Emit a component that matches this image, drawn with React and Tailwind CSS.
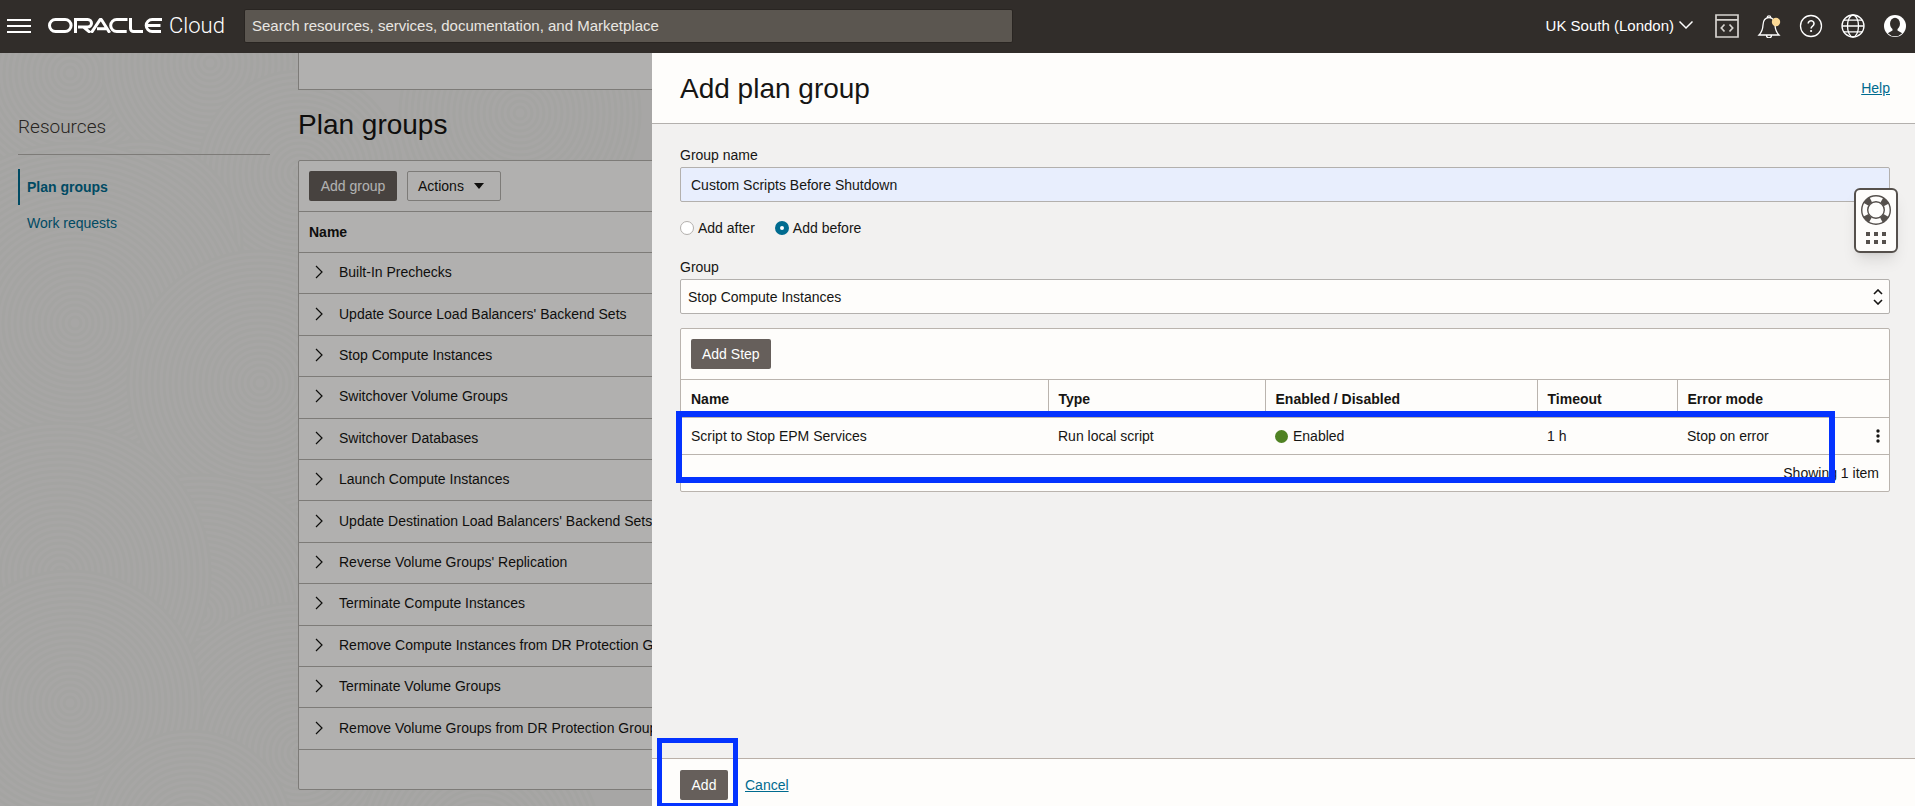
import { useState } from 'react'

const planGroups = [
  'Built-In Prechecks',
  "Update Source Load Balancers' Backend Sets",
  'Stop Compute Instances',
  'Switchover Volume Groups',
  'Switchover Databases',
  'Launch Compute Instances',
  "Update Destination Load Balancers' Backend Sets",
  "Reverse Volume Groups' Replication",
  'Terminate Compute Instances',
  'Remove Compute Instances from DR Protection Group',
  'Terminate Volume Groups',
  'Remove Volume Groups from DR Protection Group',
]

const steps = [
  { name: 'Script to Stop EPM Services', type: 'Run local script', status: 'Enabled', timeout: '1 h', errorMode: 'Stop on error' },
]

// centre x, centre y, number of rings
const swirls = [
  [70, 20, 22], [210, 10, 18], [520, 60, 20], [300, 120, 17], [140, 190, 17],
  [75, 270, 30], [260, 330, 22], [200, 560, 23], [60, 520, 25], [300, 700, 25],
  [70, 650, 22], [190, 780, 17], [480, 790, 20],
]

function OracleLogo() {
  return (
    <svg className="h-[15px] w-[114px]" viewBox="0 0 114 15" role="img" aria-label="Oracle">
      <g fill="none" stroke="#fff" strokeWidth="3">
        <rect x="1.5" y="1.5" width="21.6" height="12" rx="6" />
        <path d="M27.500 15V1.500h12.200a3.800 3.800 0 0 1 0 7.600H30M35.500 9.200l6.800 5.400" />
        <path d="M43.300 14.800l8.600-13q.8-1.200 1.600 0l8.200 13M49 10.800h9" />
        <path d="M79.500 1.500H68.700a6 6 0 0 0 0 12h10" />
        <path d="M82.500 0v10.500a3 3 0 0 0 3 3H95" />
        <path d="M114 1.500h-9.800a6 6 0 0 0 0 12H113M99 7.500h13.500" />
      </g>
    </svg>
  )
}

function DevToolsIcon() {
  return (
    <svg className="h-6 w-6" viewBox="0 0 24 24" fill="none" stroke="#d6d3cf" strokeWidth="1.700">
      <path d="M1 1h22v22H1zM1 5.800h22M9.500 10.500L6.300 14l3.200 3.500M14.500 10.500l3.200 3.500-3.200 3.500" />
    </svg>
  )
}

function BellIcon() {
  return (
    <svg className="h-6 w-6" viewBox="0 0 24 24" fill="none" stroke="#fff" strokeWidth="1.300">
      <path d="M2 21c2.400-2.400 3.800-5.500 4-10 .2-4.500 2-7.300 6-7.300s5.800 2.800 6 7.300c.2 4.500 1.600 7.600 4 10zM10.300 3.500a1.700 1.700 0 1 1 3.400 0M9.500 21.300a2.500 2.500 0 0 0 5 0" />
      <circle cx="19" cy="8" r="4.200" fill="#fbd995" stroke="none" />
    </svg>
  )
}

function HelpIcon() {
  return (
    <svg className="h-6 w-6" viewBox="0 0 24 24" fill="none" stroke="#fff" strokeWidth="1.300">
      <circle cx="12" cy="12" r="10.500" />
      <path d="M9.200 9.600a2.900 2.900 0 1 1 4.400 2.500c-1 .7-1.500 1.200-1.500 2.500" strokeWidth="1.600" />
      <circle cx="12.100" cy="17" r="1.100" fill="#fff" stroke="none" />
    </svg>
  )
}

function GlobeIcon() {
  return (
    <svg className="h-6 w-6" viewBox="0 0 24 24" fill="none" stroke="#fff" strokeWidth="1.300">
      <circle cx="12" cy="12" r="11" />
      <ellipse cx="12" cy="12" rx="5.500" ry="11" />
      <path d="M1 12h22M3 6.200h18M3 17.800h18" />
    </svg>
  )
}

function AvatarIcon() {
  return (
    <svg className="h-6 w-6" viewBox="0 0 24 24">
      <circle cx="12" cy="12" r="11" fill="#fff" />
      <ellipse cx="12" cy="9.700" rx="5" ry="6" fill="#312d2a" />
      <path d="M9.500 13h5v3.500l4.700 2.800a10 10 0 0 1-14.400 0l4.700-2.800z" fill="#312d2a" />
    </svg>
  )
}

function Header() {
  return (
    <header className="flex h-[53px] shrink-0 items-center bg-[#312d2a] pr-2 pb-0.5 pl-[7px] text-[15px] text-white">
      <button aria-label="Menu" className="flex w-6 flex-col gap-1">
        <span className="h-0.5 bg-white" />
        <span className="h-0.5 bg-white" />
        <span className="h-0.5 bg-white" />
      </button>
      <a href="#home" className="ml-[17px] flex w-[196px] items-center gap-[7px]">
        <OracleLogo />
        <span className="font-[Roboto] text-[22px] leading-6 font-light">Cloud</span>
      </a>
      <input
        aria-label="Search"
        placeholder="Search resources, services, documentation, and Marketplace"
        className="h-[34px] w-[769px] rounded-xs border border-[#292522] bg-[#5b5650] px-[7px] placeholder:text-[#e9e6e2]"
      />
      <div className="ml-auto flex items-center gap-[18px]">
        <button className="flex items-center gap-[5px]">
          UK South (London)
          <svg className="h-2.5 w-3.5" viewBox="0 0 14 10" fill="none" stroke="#fff" strokeWidth="1.500">
            <path d="M.5 1.500L7 8l6.500-6.500" />
          </svg>
        </button>
        <button aria-label="Developer tools" className="ml-1"><DevToolsIcon /></button>
        <button aria-label="Notifications"><BellIcon /></button>
        <button aria-label="Help"><HelpIcon /></button>
        <button aria-label="Language"><GlobeIcon /></button>
        <button aria-label="Profile"><AvatarIcon /></button>
      </div>
    </header>
  )
}

function Swirls() {
  return (
    <svg className="absolute inset-0 h-full w-full" aria-hidden="true">
      {swirls.map(([x, y, count]) => (
        <g key={`${x}-${y}`} fill="#f0eeec" stroke="#ebebe8" strokeWidth="3">
          {Array.from({ length: count }, (_, i) => (
            <circle key={i} cx={x} cy={y} r={(count - i) * 6} />
          ))}
        </g>
      ))}
    </svg>
  )
}

function Sidebar() {
  return (
    <nav className="w-[252px] shrink-0 pt-[62px]">
      <h2 className="border-b border-[#b3b0ad] pb-[15px] font-[Roboto] text-[19px] leading-6 font-light text-[#3a3632]">Resources</h2>
      <ul className="mt-3.5">
        <li className="flex h-9 items-center border-l-2 border-[#006b8f] pl-[7px]">
          <a href="#plan-groups" className="font-bold text-[#006b8f]">Plan groups</a>
        </li>
        <li className="flex h-9 items-center pl-[9px]">
          <a href="#work-requests" className="text-[#006b8f]">Work requests</a>
        </li>
      </ul>
    </nav>
  )
}

function PlanGroups() {
  return (
    <section className="flex-1">
      <div className="h-[37px] border border-t-0 border-[#b3b0ad] bg-[#fefdfb]" />
      <h1 className="mt-[17px] mb-[17px] text-[28px] leading-9">Plan groups</h1>
      <div className="rounded-xs border border-[#b3b0ad] bg-[#fefdfb]">
        <div className="flex gap-2.5 p-2.5">
          <button className="h-[30px] w-[88px] rounded-xs bg-[#665f5b] text-white">Add group</button>
          <button className="flex h-[30px] w-[94px] items-center gap-2.5 rounded-xs border border-[#b3b0ad] pl-2.5">
            Actions
            <svg className="h-1.5 w-2.5" viewBox="0 0 10 6"><path d="M0 0h10L5 6z" fill="#161513" /></svg>
          </button>
        </div>
        <table className="h-[539px] w-full text-left">
          <thead>
            <tr className="h-[41px] border-y border-[#b3b0ad]">
              <th className="px-2.5 font-bold">Name</th>
            </tr>
          </thead>
          <tbody>
            {planGroups.map((group) => (
              <tr key={group} className="border-b border-[#b3b0ad]">
                <td className="pb-0.5 pl-4">
                  <div className="flex items-center gap-4">
                    <button aria-label={`Expand ${group}`}>
                      <svg className="h-3.5 w-2" viewBox="0 0 8 14" fill="none" stroke="#161513" strokeWidth="1.200">
                        <path d="M1 1l6 6-6 6" />
                      </svg>
                    </button>
                    {group}
                  </div>
                </td>
              </tr>
            ))}
          </tbody>
        </table>
        <div className="h-[39px]" />
      </div>
    </section>
  )
}

function SupportWidget() {
  return (
    <button aria-label="Support" className="absolute top-[135px] right-[17px] flex h-[65px] w-11 flex-col items-center rounded-md border-2 border-[#55504c] bg-[#fefdfb] pt-[5px] shadow-lg">
      <svg className="h-[52px] w-[30px]" viewBox="0 0 30 52" fill="none" stroke="#55504c">
        <circle cx="15" cy="15" r="11.500" strokeWidth="6" strokeDasharray="6.500 11.560" strokeDashoffset="-5.800" />
        <circle cx="15" cy="15" r="14.300" strokeWidth="1.400" />
        <circle cx="15" cy="15" r="8.300" strokeWidth="1.400" />
        <path d="M5 39h4m4 0h4m4 0h4M5 47h4m4 0h4m4 0h4" strokeWidth="4" />
      </svg>
    </button>
  )
}

function StepsTable() {
  return (
    <div className="relative mt-3.5 rounded-xs border border-[#bab4ae] bg-[#fefdfb]">
      <div className="p-2.5">
        <button className="h-[30px] rounded-xs bg-[#665f5b] px-[11px] text-white">Add Step</button>
      </div>
      <table className="w-full table-fixed text-left">
        <colgroup>
          <col className="w-[367px]" />
          <col className="w-[217px]" />
          <col className="w-[272px]" />
          <col className="w-[140px]" />
          <col />
          <col className="w-[22px]" />
        </colgroup>
        <thead>
          <tr className="h-[38px] border-y border-[#bab4ae]">
            <th className="border-r border-[#bab4ae] px-2.5">Name</th>
            <th className="border-r border-[#bab4ae] px-2.5">Type</th>
            <th className="border-r border-[#bab4ae] px-2.5">Enabled / Disabled</th>
            <th className="border-r border-[#bab4ae] px-2.5">Timeout</th>
            <th className="px-2.5">Error mode</th>
            <th aria-label="Row actions" />
          </tr>
        </thead>
        <tbody>
          {steps.map((step) => (
            <tr key={step.name} className="h-[37px] border-b border-[#bab4ae]">
              <td className="px-2.5">{step.name}</td>
              <td className="px-2.5">{step.type}</td>
              <td className="px-2.5">
                <span className="flex items-center gap-[5px]">
                  <span className="h-[13px] w-[13px] rounded-full bg-[#508223]" />
                  {step.status}
                </span>
              </td>
              <td className="px-2.5">{step.timeout}</td>
              <td className="px-2.5">{step.errorMode}</td>
              <td>
                <button aria-label="Step actions" className="flex w-full justify-center">
                  <svg className="h-3.5 w-1" viewBox="0 0 4 14" fill="#161513">
                    <circle cx="2" cy="2" r="1.700" />
                    <circle cx="2" cy="7" r="1.700" />
                    <circle cx="2" cy="12" r="1.700" />
                  </svg>
                </button>
              </td>
            </tr>
          ))}
        </tbody>
      </table>
      <p className="px-2.5 py-2 text-right">Showing 1 item</p>
      <div className="pointer-events-none absolute top-[82px] right-[54px] -left-[5px] h-[72px] border-[6px] border-[#0433ff]" />
    </div>
  )
}

function AddPlanGroupPanel() {
  const [name, setName] = useState('Custom Scripts Before Shutdown')
  const [position, setPosition] = useState('before')

  const radioClass =
    'h-3.5 w-3.5 appearance-none rounded-full border border-[#b3b0ad] bg-white checked:border-[5px] checked:border-[#006b8f]'

  return (
    <aside className="absolute inset-y-0 right-0 left-[652px] flex flex-col bg-[#f2f1f0]">
      <div className="flex h-[71px] shrink-0 items-center justify-between border-b border-[#b3b0ad] bg-[#fefdfb] pr-[25px] pl-7">
        <h1 className="pt-0.5 text-[28px] leading-9">Add plan group</h1>
        <a href="#help" className="text-[#006b8f] underline">Help</a>
      </div>

      <div className="flex-1 overflow-hidden pt-5 pr-[25px] pl-7">
        <label htmlFor="group-name" className="block pb-px leading-[22px]">Group name</label>
        <input
          id="group-name"
          value={name}
          onChange={(e) => setName(e.target.value)}
          className="h-[35px] w-full rounded-xs border border-[#b3b0ad] bg-[#e8eefd] px-2.5"
        />

        <div className="mt-4 flex gap-5">
          <label className="flex items-center gap-1">
            <input type="radio" name="position" className={radioClass} checked={position === 'after'} onChange={() => setPosition('after')} />
            Add after
          </label>
          <label className="flex items-center gap-1">
            <input type="radio" name="position" className={radioClass} checked={position === 'before'} onChange={() => setPosition('before')} />
            Add before
          </label>
        </div>

        <label htmlFor="group" className="mt-[18px] block pb-px leading-[22px]">Group</label>
        <div className="relative">
          <select id="group" defaultValue="Stop Compute Instances" className="h-[35px] w-full appearance-none rounded-xs border border-[#b3b0ad] bg-[#fefdfb] px-[7px]">
            {planGroups.map((group) => (
              <option key={group}>{group}</option>
            ))}
          </select>
          <svg className="pointer-events-none absolute top-2.5 right-[7px] h-4 w-2.5" viewBox="0 0 10 16" fill="none" stroke="#161513" strokeWidth="1.600">
            <path d="M1 5l4-4 4 4M1 11l4 4 4-4" />
          </svg>
        </div>

        <StepsTable />
      </div>

      <div className="relative flex h-12 shrink-0 items-center gap-[17px] border-t border-[#bab0a8] bg-[#fefdfb] pt-[5px] pl-7">
        <button className="h-[30px] w-12 rounded-xs bg-[#665f5b] text-white">Add</button>
        <a href="#cancel" className="text-[#006b8f] underline">Cancel</a>
        <div className="pointer-events-none absolute -top-[21px] bottom-0 left-[5px] w-[81px] border-[5px] border-b-[3px] border-[#0433ff]" />
      </div>

      <SupportWidget />
    </aside>
  )
}

export default function App() {
  return (
    <div className="flex h-screen flex-col overflow-hidden font-['Liberation_Sans',Arial,sans-serif] text-sm text-[#161513]">
      <Header />
      <main className="relative flex-1 overflow-hidden bg-[#f0eeec]">
        <Swirls />
        <div className="relative flex gap-7 px-[18px]">
          <Sidebar />
          <PlanGroups />
        </div>
        <div className="absolute inset-0 bg-black/30" />
        <AddPlanGroupPanel />
      </main>
    </div>
  )
}
